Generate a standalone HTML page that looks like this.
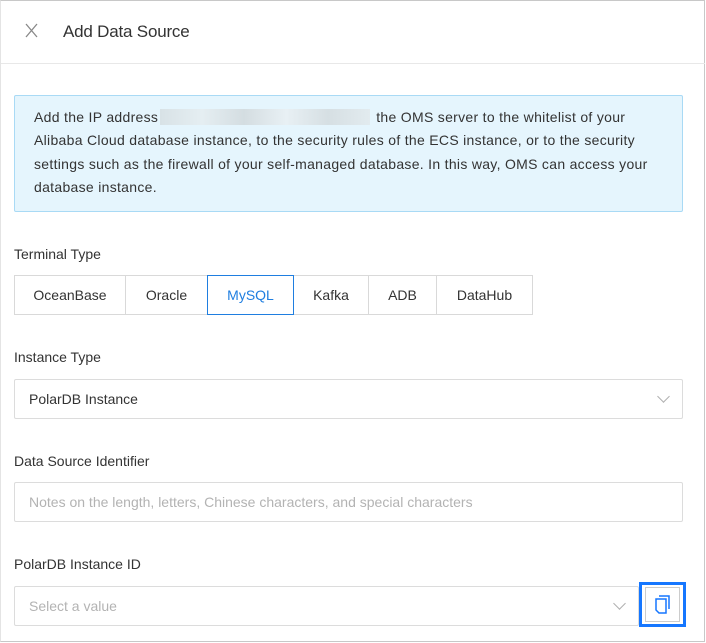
<!DOCTYPE html>
<html><head><meta charset="utf-8"><style>
*{box-sizing:border-box;margin:0;padding:0}
body{width:706px;height:643px;background:#fff;font-family:"Liberation Sans",sans-serif;color:#333;position:relative;overflow:hidden}
.frame{position:absolute;left:0;top:0;width:705px;height:642px;border:1px solid #c8c8c8;border-left:1px solid #e4e4e4}
.hdr{position:absolute;left:1px;top:1px;right:1px;height:63px;border-bottom:1px solid #e8e8e8}
.title{position:absolute;left:62px;top:21px;font-size:17px;color:#333;letter-spacing:-0.2px}
.alert{position:absolute;left:14px;top:95px;width:669px;height:117px;background:#e5f5fd;border:1px solid #a9daf5;border-radius:2px;padding:10px 19px;font-size:14px;line-height:23.3px;color:#333;white-space:nowrap;letter-spacing:0.3px}
.blur{display:inline-block;width:210px;height:16px;margin:0 6px 0 2px;vertical-align:-3px;background:linear-gradient(90deg,#d8e2e6,#e5eef2,#d4dde1,#e8f0f4,#d6dfe3,#e2ebef);}
.lbl{position:absolute;left:14px;font-size:14px;color:#333}
.tabs{position:absolute;left:14px;top:275px;display:flex;height:40px}
.tabs div{border:1px solid #d9d9d9;margin-left:-1px;height:40px;line-height:38px;font-size:14px;text-align:center;color:#333}
.tabs .on{border-color:#1f7ee0;color:#1f7ee0;position:relative;z-index:1}
.inp{position:absolute;left:14px;width:669px;height:40px;border:1px solid #dcdcdc;border-radius:2px;font-size:14px;line-height:38px;padding-left:14px;color:#333}
.ph{color:#b3b3b3}
.chev{position:absolute;right:14px;top:12px;width:9px;height:9px;border-right:1px solid #b0b0b0;border-bottom:1px solid #b0b0b0;transform:rotate(45deg)}
.btn{position:absolute;left:639px;top:582px;width:47px;height:45px;border:3px solid #1677ff;background:#fff}
.btn::before{content:"";position:absolute;left:3px;top:2px;right:3px;bottom:2px;border:1px solid #ccc}
</style></head><body>
<div class="frame"></div>
<div class="hdr"><svg style="position:absolute;left:24px;top:22px" width="13" height="15" viewBox="0 0 13 15" stroke="#888" stroke-width="1.3"><path d="M1 1L12 14M12 1L1 14"/></svg><span class="title">Add Data Source</span></div>
<div class="alert">Add the IP address<span class="blur"></span>the OMS server to the whitelist of your<br>Alibaba Cloud database instance, to the security rules of the ECS instance, or to the security<br>settings such as the firewall of your self-managed database. In this way, OMS can access your<br>database instance.</div>
<div class="lbl" style="top:246px">Terminal Type</div>
<div class="tabs">
<div style="width:112px;margin-left:0">OceanBase</div>
<div style="width:83px">Oracle</div>
<div class="on" style="width:87px">MySQL</div>
<div style="width:76px">Kafka</div>
<div style="width:69px">ADB</div>
<div style="width:97px">DataHub</div>
</div>
<div class="lbl" style="top:349px">Instance Type</div>
<div class="inp" style="top:379px">PolarDB Instance<span class="chev"></span></div>
<div class="lbl" style="top:453px">Data Source Identifier</div>
<div class="inp ph" style="top:482px">Notes on the length, letters, Chinese characters, and special characters</div>
<div class="lbl" style="top:556px">PolarDB Instance ID</div>
<div class="inp ph" style="top:586px;width:625px">Select a value<span class="chev"></span></div>
<div class="btn"><svg style="position:absolute;left:13px;top:10px" width="16" height="20" viewBox="0 0 16 20" fill="none" stroke="#1677ff" stroke-width="1.5"><path d="M4 1h10v13"/><path d="M1 4h10v14H4L1 15z"/></svg></div>
</body></html>
